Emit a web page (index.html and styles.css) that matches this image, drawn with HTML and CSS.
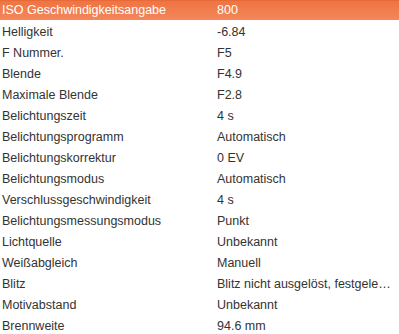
FILE: index.html
```html
<!DOCTYPE html>
<html>
<head>
<meta charset="utf-8">
<link rel="stylesheet" href="styles.css">
</head>
<body>
<div class="list">
  <div class="row selected"><div class="key">ISO Geschwindigkeitsangabe</div><div class="val">800</div></div>
  <div class="row"><div class="key">Helligkeit</div><div class="val">-6.84</div></div>
  <div class="row"><div class="key">F Nummer.</div><div class="val">F5</div></div>
  <div class="row"><div class="key">Blende</div><div class="val">F4.9</div></div>
  <div class="row"><div class="key">Maximale Blende</div><div class="val">F2.8</div></div>
  <div class="row"><div class="key">Belichtungszeit</div><div class="val">4 s</div></div>
  <div class="row"><div class="key">Belichtungsprogramm</div><div class="val">Automatisch</div></div>
  <div class="row"><div class="key">Belichtungskorrektur</div><div class="val">0 EV</div></div>
  <div class="row"><div class="key">Belichtungsmodus</div><div class="val">Automatisch</div></div>
  <div class="row"><div class="key">Verschlussgeschwindigkeit</div><div class="val">4 s</div></div>
  <div class="row"><div class="key">Belichtungsmessungsmodus</div><div class="val">Punkt</div></div>
  <div class="row"><div class="key">Lichtquelle</div><div class="val">Unbekannt</div></div>
  <div class="row"><div class="key">Weißabgleich</div><div class="val">Manuell</div></div>
  <div class="row"><div class="key">Blitz</div><div class="val">Blitz nicht ausgelöst, festgelegter Blitzmodus</div></div>
  <div class="row"><div class="key">Motivabstand</div><div class="val">Unbekannt</div></div>
  <div class="row"><div class="key">Brennweite</div><div class="val">94.6 mm</div></div>
</div>
</body>
</html>
```
FILE: styles.css
```css
html, body {
  margin: 0;
  padding: 0;
  background: #ffffff;
  overflow: hidden;
}
.list {
  display: flex;
  flex-direction: column;
  width: 399px;
  font-family: "Liberation Sans", sans-serif;
  font-size: 12.5px;
  color: #333333;
}
.row {
  display: grid;
  grid-template-columns: 215px 184px;
  height: 21px;
  align-items: center;
}
.row.selected {
  color: #ffffff;
  background: linear-gradient(to bottom, #e0602e 0px, #ee7443 1px, #f4875a 100%);
  height: 20px;
  margin-bottom: 1px;
}
.key, .val {
  padding-left: 2px;
  white-space: nowrap;
  overflow: hidden;
  text-overflow: ellipsis;
}
.val {
  padding-right: 6px;
}
```
